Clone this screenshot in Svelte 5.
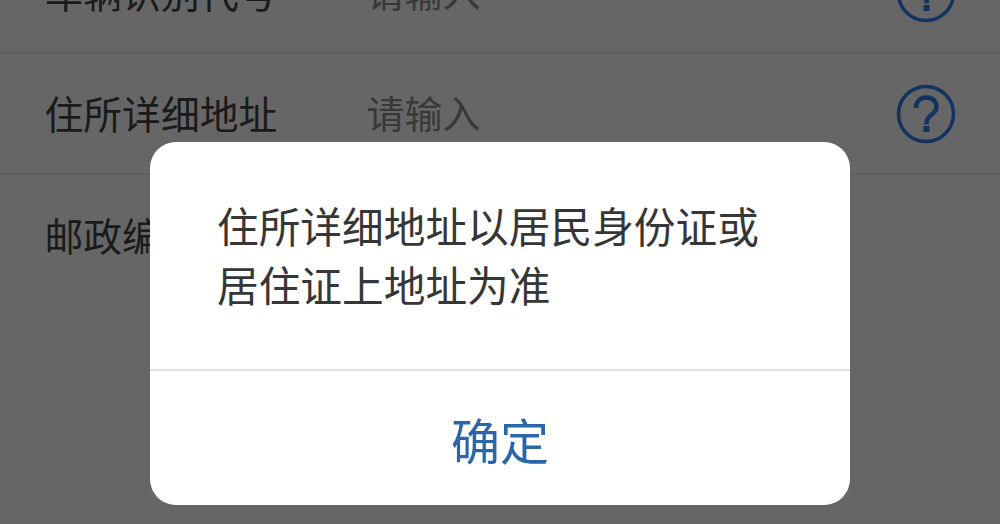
<script lang="ts">
  // Vehicle form rows behind a dimmed overlay, with a hint dialog on top.
  const rows = [
    { label: "车辆识别代号", value: "请输入", help: true },
    { label: "住所详细地址", value: "请输入", help: true },
    { label: "邮政编码", value: "", help: false },
  ];
</script>

<div class="page">
  <ul class="form">
    {#each rows as r}
      <li class="row">
        <span class="label">{r.label}</span>
        <span class="value">{r.value}</span>
        {#if r.help}
          <svg class="help" viewBox="0 0 60 60" aria-hidden="true">
            <circle cx="30" cy="30" r="27.500" fill="none" stroke="#12335f" stroke-width="3.500" />
            <path d="M20 24c0-6.500 4.300-10.500 10.300-10.500 6 0 10.200 3.800 10.200 9 0 4.200-2.200 6.200-5.300 8.500-3 2.200-4.700 3.900-4.700 8v1.500" fill="none" stroke="#12335f" stroke-width="4.500" />
            <rect x="27.500" y="42" width="6" height="6" fill="#12335f" />
          </svg>
        {/if}
      </li>
    {/each}
  </ul>

  <div class="dialog">
    <p class="message">住所详细地址以居民身份证或居住证上地址为准</p>
    <button class="confirm">确定</button>
  </div>
</div>

<style>
  :global(body) {
    margin: 0;
    background: #666;
  }
  .page {
    width: 1000px;
    height: 524px;
    overflow: hidden;
    position: relative;
    background: #666;
    font-family: "Noto Sans CJK SC", "Noto Sans", sans-serif;
  }
  .form {
    list-style: none;
    margin: -67px 0 0;
    padding: 0;
  }
  .row {
    display: flex;
    align-items: center;
    box-sizing: border-box;
    height: 121px;
    padding: 0 44px 4px 44.500px;
    border-bottom: 2px solid #5f5f5f;
  }
  .row:last-child {
    border-bottom: 0;
  }
  .label {
    width: 322px;
    font-size: 38.800px;
    color: #1a1a1a;
    white-space: nowrap;
  }
  .value {
    flex: 1;
    font-size: 38px;
    color: #383838;
  }
  .help {
    width: 60px;
    height: 60px;
    margin-top: 4px;
  }
  .dialog {
    position: absolute;
    left: 150px;
    top: 142px;
    width: 700px;
    height: 363px;
    box-sizing: border-box;
    display: flex;
    flex-direction: column;
    background: #fff;
    border-radius: 26px;
  }
  .message {
    margin: 0;
    height: 229px;
    box-sizing: border-box;
    padding: 54px 64px 0 67px;
    font-size: 41.700px;
    line-height: 58.500px;
    color: #363636;
    border-bottom: 2px solid #e2e2e2;
  }
  .confirm {
    flex: 1;
    border: 0;
    padding: 0;
    background: none;
    font: inherit;
    font-size: 49px;
    color: #2a66aa;
  }
</style>
